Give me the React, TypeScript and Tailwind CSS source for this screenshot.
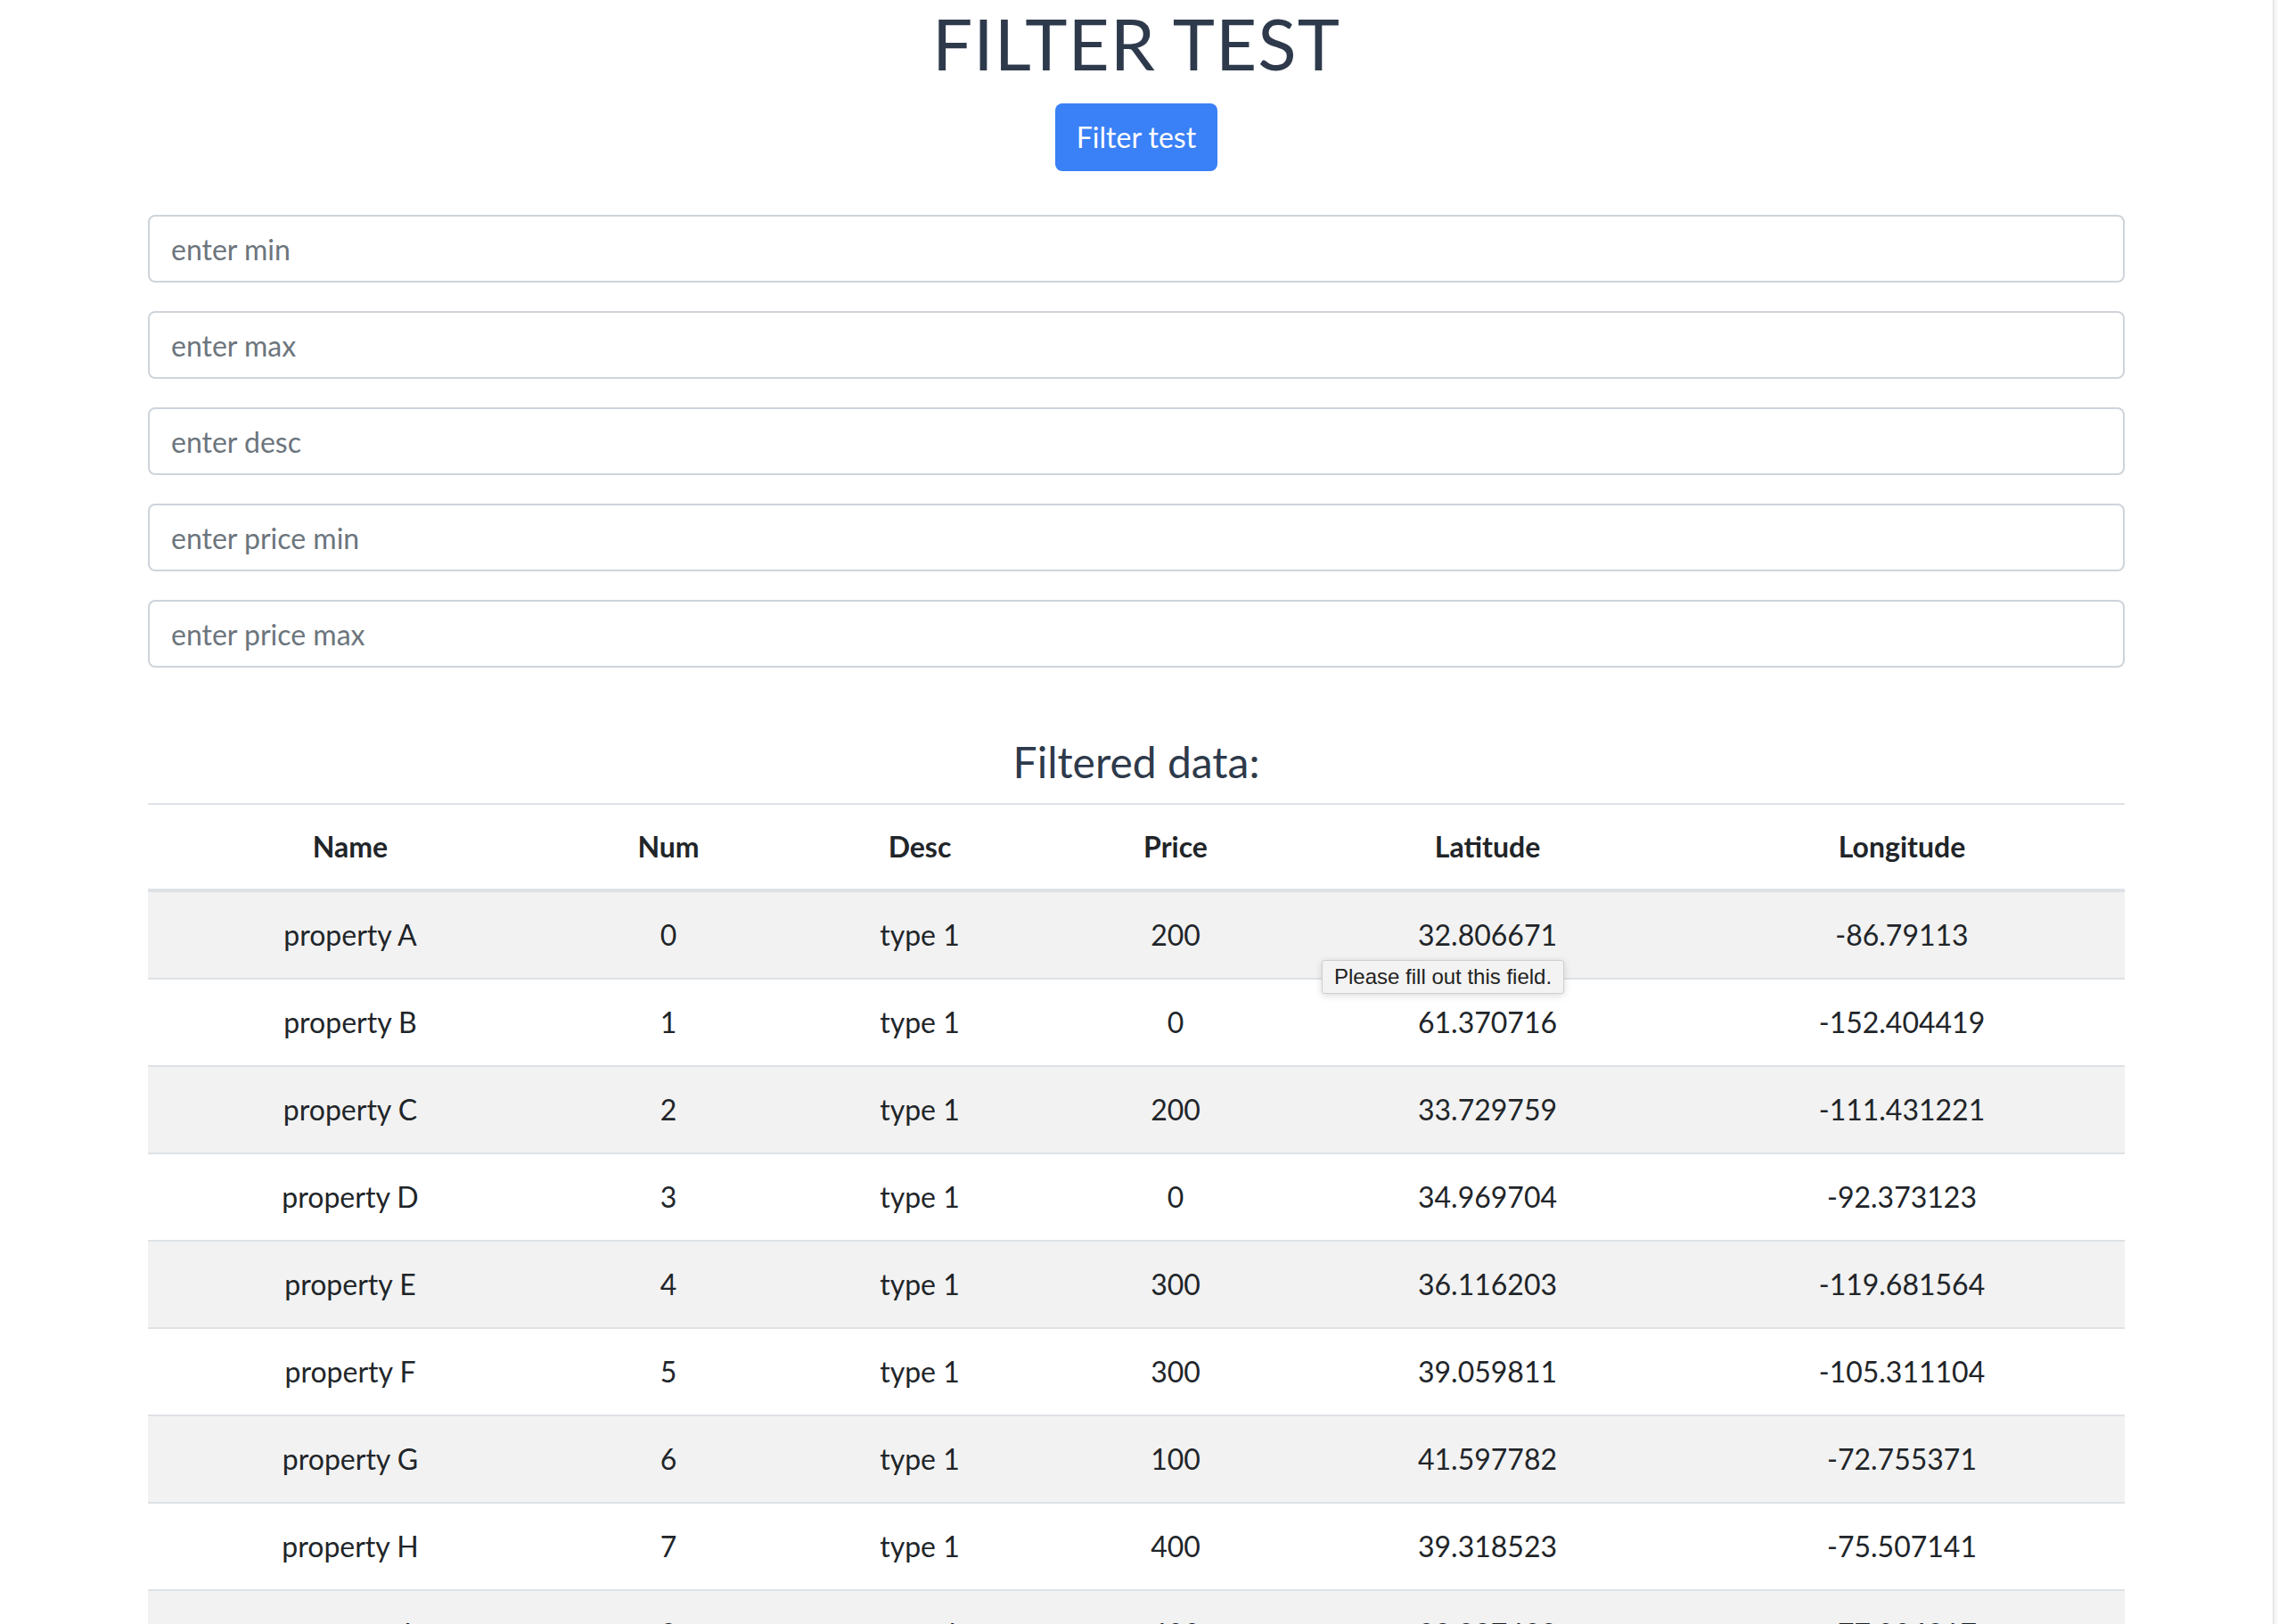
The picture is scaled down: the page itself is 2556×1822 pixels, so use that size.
import React from "react";

// table rows shown in the filtered list
const rows = [
  { name: "property A", num: 0, desc: "type 1", price: 200, lat: "32.806671", lng: "-86.79113" },
  { name: "property B", num: 1, desc: "type 1", price: 0, lat: "61.370716", lng: "-152.404419" },
  { name: "property C", num: 2, desc: "type 1", price: 200, lat: "33.729759", lng: "-111.431221" },
  { name: "property D", num: 3, desc: "type 1", price: 0, lat: "34.969704", lng: "-92.373123" },
  { name: "property E", num: 4, desc: "type 1", price: 300, lat: "36.116203", lng: "-119.681564" },
  { name: "property F", num: 5, desc: "type 1", price: 300, lat: "39.059811", lng: "-105.311104" },
  { name: "property G", num: 6, desc: "type 1", price: 100, lat: "41.597782", lng: "-72.755371" },
  { name: "property H", num: 7, desc: "type 1", price: 400, lat: "39.318523", lng: "-75.507141" },
  { name: "property I", num: 8, desc: "type 1", price: 400, lat: "38.897438", lng: "-77.026817" },
];

const placeholders = ["enter min", "enter max", "enter desc", "enter price min", "enter price max"];

const App = () => {
  return (
    <div
      className="flex h-[1822px] w-[2556px] overflow-hidden bg-white"
      style={{ fontFamily: "Lato, 'Open Sans', sans-serif" }}
    >
      <div className="w-[2550px] px-[166px]">
        {/* Heading */}
        <div className="flex flex-col items-center">
          <h1 className="text-[80px] leading-[96px] text-[#2e3a4b] tracking-[1px]">FILTER TEST</h1>
          <button
            type="button"
            className="mt-[20px] h-[76px] rounded-[8px] bg-[#3a80f6] px-[24px] text-[32px] text-white"
          >
            Filter test
          </button>
        </div>

        {/* Filter inputs */}
        <div className="relative mt-[49px] flex flex-col gap-[32px]">
          {placeholders.map((p) => (
            <input
              key={p}
              type="text"
              placeholder={p}
              className="h-[76px] w-full rounded-[8px] border-2 border-[#ced4da] px-[24px] text-[32px] text-[#495057] placeholder:text-[#6c757d] outline-none"
            />
          ))}
        </div>

        {/* Results */}
        <h4 className="mt-[77px] mb-[17px] text-center text-[48px] leading-[58px] text-[#2e3a4b]">
          Filtered data:
        </h4>
        <div className="relative">
          <table className="w-full table-fixed border-collapse text-center text-[32px] text-[#212529]">
            <colgroup>
              <col className="w-[454px]" />
              <col className="w-[260px]" />
              <col className="w-[304px]" />
              <col className="w-[270px]" />
              <col className="w-[430px]" />
              <col />
            </colgroup>
            <thead>
              <tr>
                {["Name", "Num", "Desc", "Price", "Latitude", "Longitude"].map((h) => (
                  <th
                    key={h}
                    className="border-t-2 border-b-4 border-[#dee2e6] py-[23px] leading-[48px] font-bold"
                  >
                    {h}
                  </th>
                ))}
              </tr>
            </thead>
            <tbody>
              {rows.map((r, i) => (
                <tr key={r.name} className={i % 2 === 0 ? "bg-[#f2f2f2]" : "bg-white"}>
                  <td className="border-t-2 border-[#dee2e6] py-[24px] leading-[48px]">{r.name}</td>
                  <td className="border-t-2 border-[#dee2e6] py-[24px] leading-[48px]">{r.num}</td>
                  <td className="border-t-2 border-[#dee2e6] py-[24px] leading-[48px]">{r.desc}</td>
                  <td className="border-t-2 border-[#dee2e6] py-[24px] leading-[48px]">{r.price}</td>
                  <td className="border-t-2 border-[#dee2e6] py-[24px] leading-[48px]">{r.lat}</td>
                  <td className="border-t-2 border-[#dee2e6] py-[24px] leading-[48px]">{r.lng}</td>
                </tr>
              ))}
            </tbody>
          </table>

          {/* validation bubble */}
          <div
            className="absolute left-[1317px] top-[176px] rounded-[3px] border border-[#cfcfcf] bg-[#f3f3f3] px-[13px] py-[3px] text-[24px] leading-[30px] text-[#222] shadow-[0_2px_8px_rgba(0,0,0,0.15)]"
            style={{ fontFamily: "'Liberation Sans', Arial, sans-serif" }}
          >
            Please fill out this field.
          </div>
        </div>
      </div>

      {/* scrollbar track edge */}
      <div className="w-[6px] border-l-2 border-[#e6e6e6] bg-[#f7f7f7]" />
    </div>
  );
};

export default App;
